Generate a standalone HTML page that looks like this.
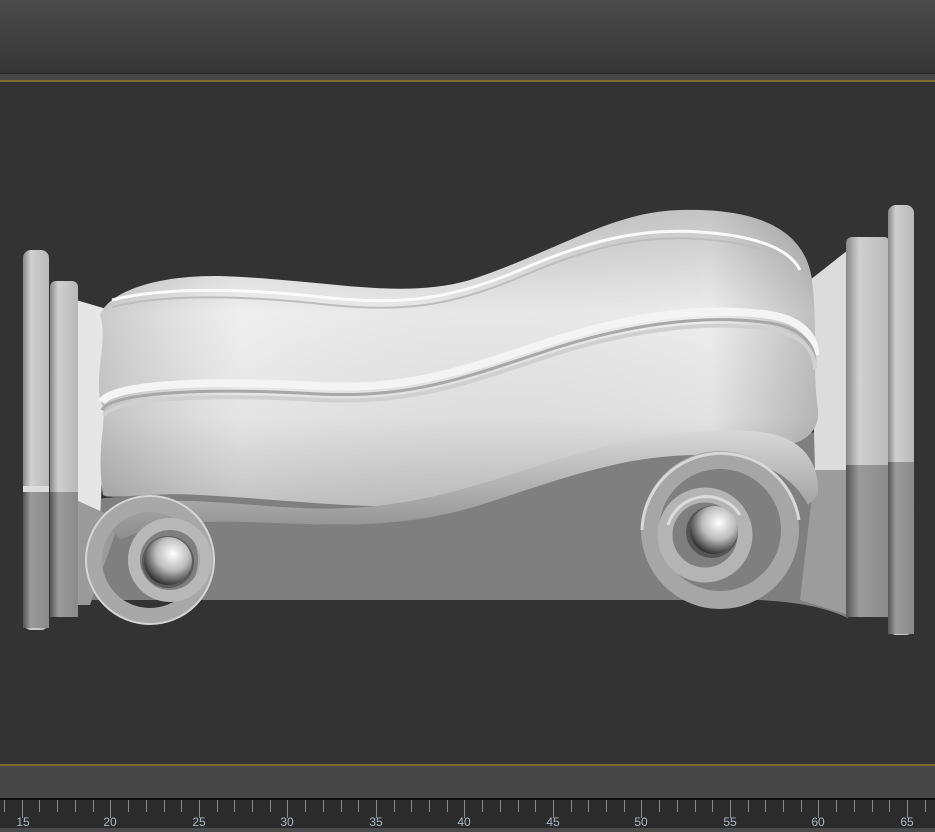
<!DOCTYPE html>
<html><head><style>
html,body{margin:0;padding:0;background:#333;width:935px;height:832px;overflow:hidden}
svg{display:block}
text{font-family:"Liberation Sans",sans-serif;font-size:12px;fill:#aab8c8}
</style></head><body>
<svg width="935" height="832" viewBox="0 0 935 832" xmlns="http://www.w3.org/2000/svg">
<defs>
<linearGradient id="hdr" x1="0" y1="0" x2="0" y2="1"><stop offset="0" stop-color="#4a4a4a"/><stop offset="1" stop-color="#363636"/></linearGradient>
<linearGradient id="body" x1="0" y1="0" x2="0" y2="1"><stop offset="0" stop-color="#c4c4c4"/><stop offset="0.35" stop-color="#ededed"/><stop offset="0.7" stop-color="#e2e2e2"/><stop offset="1" stop-color="#bcbcbc"/></linearGradient>
<linearGradient id="bodyH" x1="0" y1="0" x2="1" y2="0"><stop offset="0" stop-color="#000" stop-opacity="0.15"/><stop offset="0.2" stop-color="#fff" stop-opacity="0.1"/><stop offset="0.85" stop-color="#000" stop-opacity="0"/><stop offset="1" stop-color="#000" stop-opacity="0.2"/></linearGradient>
<linearGradient id="plL" x1="0" y1="0" x2="1" y2="0"><stop offset="0" stop-color="#888"/><stop offset="0.3" stop-color="#d0d0d0"/><stop offset="1" stop-color="#b8b8b8"/></linearGradient>
<linearGradient id="plD" x1="0" y1="0" x2="1" y2="0"><stop offset="0" stop-color="#555"/><stop offset="0.3" stop-color="#9a9a9a"/><stop offset="1" stop-color="#8a8a8a"/></linearGradient>
<radialGradient id="ball" cx="0.6" cy="0.35" r="0.7"><stop offset="0" stop-color="#fff"/><stop offset="0.5" stop-color="#bbb"/><stop offset="1" stop-color="#222"/></radialGradient>
<linearGradient id="band" x1="0" y1="0" x2="0" y2="1"><stop offset="0" stop-color="#d8d8d8"/><stop offset="1" stop-color="#8c8c8c"/></linearGradient>
</defs>
<rect x="0" y="0" width="935" height="73" fill="url(#hdr)"/>
<rect x="0" y="73" width="935" height="1" fill="#2a2a2a"/>
<rect x="0" y="74" width="935" height="6" fill="#474747"/>
<rect x="0" y="80" width="935" height="2" fill="#7a6a2e"/>
<rect x="0" y="82" width="935" height="682" fill="#333"/>
<rect x="0" y="764" width="935" height="2" fill="#7a6a2e"/>
<rect x="0" y="766" width="935" height="32" fill="#464646"/>
<rect x="0" y="798" width="935" height="30" fill="#2b2b2b"/>
<rect x="0" y="798" width="935" height="2" fill="#111"/>
<rect x="0" y="828" width="935" height="4" fill="#4a4a4a"/>
<g stroke="#8a8a8a" stroke-width="1">
<path d="M4.5 800V812M22.5 800V818M39.5 800V812M57.5 800V812M75.5 800V812M93.5 800V812M110.5 800V818M128.5 800V812M146.5 800V812M164.5 800V812M181.5 800V812M199.5 800V818M217.5 800V812M234.5 800V812M252.5 800V812M270.5 800V812M287.5 800V818M305.5 800V812M323.5 800V812M341.5 800V812M358.5 800V812M376.5 800V818M394.5 800V812M411.5 800V812M429.5 800V812M447.5 800V812M464.5 800V818M482.5 800V812M500.5 800V812M518.5 800V812M535.5 800V812M553.5 800V818M571.5 800V812M588.5 800V812M606.5 800V812M624.5 800V812M641.5 800V818M659.5 800V812M677.5 800V812M695.5 800V812M712.5 800V812M730.5 800V818M748.5 800V812M765.5 800V812M783.5 800V812M801.5 800V812M818.5 800V818M836.5 800V812M854.5 800V812M872.5 800V812M889.5 800V812M907.5 800V818M925.5 800V812"/>
</g>
<g text-anchor="middle">
<text x="23" y="826">15</text><text x="110" y="826">20</text><text x="199" y="826">25</text><text x="287" y="826">30</text><text x="376" y="826">35</text><text x="464" y="826">40</text><text x="553" y="826">45</text><text x="641" y="826">50</text><text x="730" y="826">55</text><text x="818" y="826">60</text><text x="907" y="826">65</text>
</g>
<!-- back plate -->
<path d="M85 600 L85 500 L840 430 L848 618 C820 605 790 602 760 600 Z" fill="#7f7f7f"/>
<!-- neck areas -->
<path d="M76 300 L110 310 L100 520 L76 500 Z" fill="#e6e6e6"/>
<path d="M76 500 L120 520 L90 605 L76 605 Z" fill="#9a9a9a"/>
<path d="M848 250 L810 280 L815 470 L848 470 Z" fill="#dcdcdc"/>
<path d="M848 470 L815 470 L800 600 L848 615 Z" fill="#9c9c9c"/>
<!-- main body -->
<path d="M100 315 C110 290 160 275 220 276 C330 280 400 300 470 280 C560 250 610 212 680 210 C760 208 805 230 812 280 C818 330 812 370 818 410 C820 440 790 450 760 445 C680 440 560 480 480 500 C400 515 300 500 200 495 C150 492 110 500 103 495 C95 440 110 420 100 400 C95 370 108 340 100 315 Z" fill="url(#body)"/>
<path d="M100 315 C110 290 160 275 220 276 C330 280 400 300 470 280 C560 250 610 212 680 210 C760 208 805 230 812 280 C818 330 812 370 818 410 C820 440 790 450 760 445 C680 440 560 480 480 500 C400 515 300 500 200 495 C150 492 110 500 103 495 C95 440 110 420 100 400 C95 370 108 340 100 315 Z" fill="url(#bodyH)"/>
<path d="M112 300 C170 285 260 290 330 298 C400 305 450 300 520 270 C590 240 640 228 700 232 C760 236 790 250 800 270" fill="none" stroke="#fafafa" stroke-width="3"/>
<path d="M112 307 C170 292 260 297 330 305 C400 312 450 307 520 277 C590 247 640 235 700 239 C760 243 790 257 800 277" fill="none" stroke="#bdbdbd" stroke-width="2"/>
<path d="M102 402 C110 385 200 380 300 385 C400 392 450 375 540 345 C620 318 700 305 770 315 C800 320 815 335 815 355" fill="none" stroke="#f4f4f4" stroke-width="8"/>
<path d="M102 410 C110 393 200 388 300 393 C400 400 450 383 540 353 C620 326 700 313 770 323 C800 328 815 343 815 363" fill="none" stroke="#a8a8a8" stroke-width="3"/>
<path d="M104 416 C112 399 200 394 300 399 C400 406 450 389 540 359 C620 332 700 319 770 329 C800 334 815 349 815 369" fill="none" stroke="#d0d0d0" stroke-width="4"/>
<!-- scroll band -->
<path d="M100 515 C140 490 230 505 300 508 C390 512 450 495 540 465 C620 440 690 425 760 432 C800 436 820 460 818 495 L808 505 C790 470 750 455 700 455 C620 455 560 480 480 505 C400 530 330 525 250 522 C190 520 150 525 120 540 Z" fill="url(#band)"/>
<!-- left scroll -->
<circle cx="150" cy="560" r="56" fill="none" stroke="#a8a8a8" stroke-width="16"/>
<circle cx="150" cy="560" r="64" fill="none" stroke="#d5d5d5" stroke-width="2"/>
<circle cx="170" cy="560" r="36" fill="none" stroke="#b8b8b8" stroke-width="12"/>
<circle cx="168" cy="562" r="26" fill="#5a5a5a"/>
<circle cx="168" cy="561" r="24" fill="url(#ball)"/>
<!-- right scroll -->
<circle cx="720" cy="530" r="70" fill="none" stroke="#a6a6a6" stroke-width="18"/>
<path d="M642 530 A79 79 0 0 1 799 520" fill="none" stroke="#d8d8d8" stroke-width="3"/>
<circle cx="705" cy="535" r="40" fill="none" stroke="#b4b4b4" stroke-width="15"/>
<path d="M668 525 A40 40 0 0 1 740 515" fill="none" stroke="#dcdcdc" stroke-width="3"/>
<circle cx="712" cy="532" r="26" fill="#555"/>
<circle cx="714" cy="530" r="24" fill="url(#ball)"/>
<!-- left plinths -->
<rect x="50" y="281" width="28" height="336" rx="6" fill="url(#plL)"/>
<rect x="50" y="492" width="28" height="125" fill="url(#plD)"/>
<rect x="23" y="250" width="26" height="380" rx="8" fill="url(#plL)"/>
<rect x="23" y="490" width="26" height="138" fill="url(#plD)"/>
<rect x="23" y="486" width="26" height="6" fill="#dcdcdc"/>
<!-- right plinths -->
<rect x="846" y="237" width="44" height="380" rx="6" fill="url(#plL)"/>
<rect x="846" y="465" width="44" height="152" fill="url(#plD)"/>
<rect x="888" y="205" width="26" height="430" rx="8" fill="url(#plL)"/>
<rect x="888" y="462" width="26" height="172" fill="url(#plD)"/>
</svg>
</body></html>
